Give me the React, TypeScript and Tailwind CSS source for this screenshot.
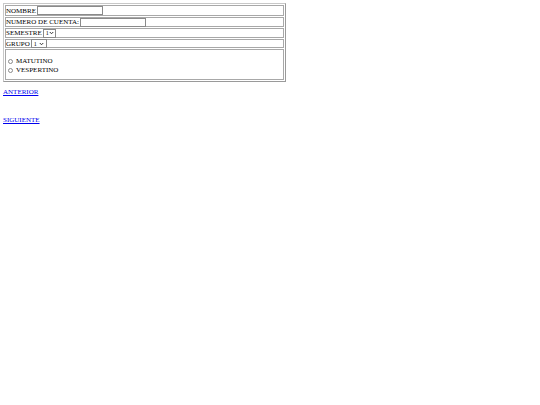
const Caret = () => (
  <svg width="5" height="4" viewBox="0 0 10 8" className="shrink-0">
    <path d="M1.5 2 L5 5.5 L8.5 2" fill="none" stroke="#333" strokeWidth="2" />
  </svg>
);

const Field = ({ w }: { w: string }) => (
  <span className={`ml-[1px] inline-block h-[9px] ${w} border border-[#8a8a8a] bg-white`} />
);

const Select = ({ w }: { w: string }) => (
  <span
    className={`ml-[1px] inline-flex h-[9px] ${w} items-center justify-between border border-[#8a8a8a] bg-white pl-[2px] pr-[2px] text-[6px] leading-none`}
  >
    <span>1</span>
    <Caret />
  </span>
);

const Radio = ({ label }: { label: string }) => (
  <div className="flex h-[9px] items-center">
    <span className="ml-[2px] mr-[3px] inline-block h-[5px] w-[5px] rounded-full border border-[#8a8a8a] bg-white" />
    <span>{label}</span>
  </div>
);

export default function App() {
  return (
    <div
      className="min-h-[405px] w-[540px] bg-white px-[3px] pt-[3px] text-[7px] leading-[8px] text-black"
      style={{ fontFamily: '"Liberation Serif", "Times New Roman", serif' }}
    >
      <div className="flex w-[283px] flex-col gap-[1px] border border-t-[#c8c8c8] border-l-[#c8c8c8] border-r-[#9a9a9a] border-b-[#9a9a9a] p-[1px]">
        <div className="flex h-[11px] items-center border border-[#a8a8a8]">
          NOMBRE
          <Field w="w-[66px]" />
        </div>
        <div className="flex h-[10px] items-center border border-[#a8a8a8]">
          NUMERO DE CUENTA:
          <Field w="w-[66px]" />
        </div>
        <div className="flex h-[10px] items-center border border-[#a8a8a8]">
          SEMESTRE
          <Select w="w-[13px]" />
        </div>
        <div className="flex h-[9px] items-center border border-[#a8a8a8]">
          GRUPO
          <Select w="w-[16px]" />
        </div>
        <div className="flex h-[31px] flex-col justify-center border border-[#a8a8a8] pt-[2px]">
          <Radio label="MATUTINO" />
          <Radio label="VESPERTINO" />
        </div>
      </div>
      <div className="mt-[6px] flex flex-col gap-[20px]">
        <a href="#" className="text-[#0000ee] underline">
          ANTERIOR
        </a>
        <a href="#" className="text-[#0000ee] underline">
          SIGUIENTE
        </a>
      </div>
    </div>
  );
}
